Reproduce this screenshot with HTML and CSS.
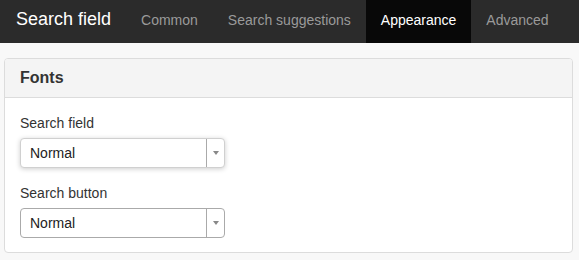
FILE: index.html
```html
<!DOCTYPE html>
<html>
<head>
<meta charset="utf-8">
<link rel="stylesheet" href="styles.css">
</head>
<body>
<nav class="navbar">
  <span class="brand">Search field</span>
  <a class="nav-link">Common</a>
  <a class="nav-link">Search suggestions</a>
  <a class="nav-link active">Appearance</a>
  <a class="nav-link">Advanced</a>
</nav>
<section class="panel">
  <div class="panel-heading">Fonts</div>
  <div class="panel-body">
    <div class="field">
      <label class="label">Search field</label>
      <div class="select focused">
        <span class="select-value">Normal</span>
        <span class="select-arrow"><span class="caret"></span></span>
      </div>
    </div>
    <div class="field">
      <label class="label">Search button</label>
      <div class="select">
        <span class="select-value">Normal</span>
        <span class="select-arrow"><span class="caret"></span></span>
      </div>
    </div>
  </div>
</section>
</body>
</html>
```
FILE: styles.css
```css
html, body {
  margin: 0;
  padding: 0;
}
body {
  background: #f8f8f8;
  font-family: "Liberation Sans", Arial, sans-serif;
  font-size: 14px;
  color: #333;
  width: 579px;
  height: 260px;
  overflow: hidden;
}
.navbar {
  display: flex;
  height: 43px;
  background: #2b2b2b;
}
.brand {
  font-size: 18px;
  line-height: 20px;
  color: #fff;
  padding: 9px 15px 14px 16px;
}
.nav-link {
  font-size: 14px;
  line-height: 20px;
  color: #9a9a9a;
  padding: 10px 15px 13px;
}
.nav-link.active {
  background: #080808;
  color: #fff;
}
.panel {
  margin: 15px 6px 0 4px;
  background: #fff;
  border: 1px solid #dcdcdc;
  border-radius: 4px;
}
.panel-heading {
  background: #f4f4f4;
  border-bottom: 1px solid #dcdcdc;
  border-radius: 3px 3px 0 0;
  padding: 10px 15px;
  font-size: 16px;
  font-weight: bold;
  line-height: 18px;
  color: #333;
}
.panel-body {
  padding: 15px 15px 14px;
  display: flex;
  flex-direction: column;
  gap: 15px;
}
.field {
  display: flex;
  flex-direction: column;
  gap: 5px;
}
.label {
  line-height: 20px;
}
.select {
  display: flex;
  width: 203px;
  height: 28px;
  border: 1px solid #aaa;
  border-radius: 4px;
  background: #fff;
}
.select.focused {
  border-color: #d0d0d0;
  box-shadow: 0 1px 5px rgba(0, 0, 0, 0.2);
}
.select-value {
  flex: 1;
  padding-left: 9px;
  line-height: 28px;
  color: #222;
}
.select-arrow {
  width: 17px;
  border-left: 1px solid #aaa;
  display: flex;
  align-items: center;
  justify-content: center;
}
.caret {
  width: 0;
  height: 0;
  border-left: 3px solid transparent;
  border-right: 3px solid transparent;
  border-top: 4px solid #888;
}
```
